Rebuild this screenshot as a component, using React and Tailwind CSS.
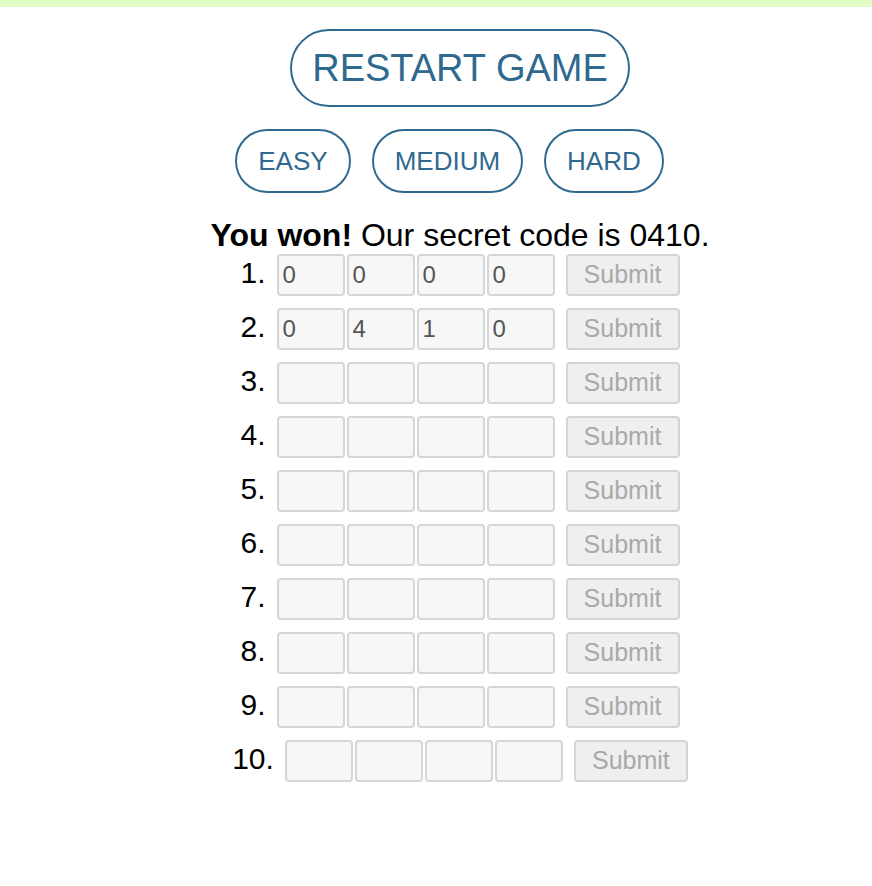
import { useState } from "react";

const guesses = [
  ["0", "0", "0", "0"],
  ["0", "4", "1", "0"],
];

const Row = ({ n, values }) => {
  return (
    <div className="h-[42px] flex items-baseline justify-center">
      <span className="text-[30px] leading-none text-black mr-[10px]">{n}.</span>
      {[0, 1, 2, 3].map((i) => (
        <input
          key={i}
          type="text"
          readOnly
          value={values ? values[i] : ""}
          className="w-[68px] h-[42px] mx-[1px] px-[4px] bg-[#f7f7f7] border-2 border-[#d6d6d6] rounded-[4px] text-[24px] text-[#555555] outline-none"
        />
      ))}
      <button
        disabled
        className="w-[114px] h-[42px] ml-[10px] bg-[#efefef] border-2 border-[#d4d4d4] rounded-[4px] text-[25px] text-[#a9a9a9]"
      >
        Submit
      </button>
    </div>
  );
};

const App = () => {
  const [level, setLevel] = useState("easy");
  const rows = Array.from({ length: 10 }, (_, i) => i + 1);

  return (
    <div className="min-h-[886px] bg-white font-['Liberation_Sans',Arial,sans-serif]">
      <div className="h-[7px] bg-[#e1fcc6]"></div>
      <div className="pl-12 flex flex-col items-center">
        <button className="mt-[22px] w-[340px] h-[78px] border-2 border-[#30698f] rounded-full text-[38px] text-[#30698f]">
          RESTART GAME
        </button>
        <div className="mt-[22px] flex">
          {["EASY", "MEDIUM", "HARD"].map((d) => (
            <button
              key={d}
              onClick={() => setLevel(d.toLowerCase())}
              className="h-[64px] px-[21px] mr-[21px] border-2 border-[#30698f] rounded-full text-[26px] text-[#30698f]"
            >
              {d}
            </button>
          ))}
        </div>
        <p className="mt-[24px] text-[32px] leading-[37px] text-black">
          <b>You won!</b> Our secret code is 0410.
        </p>
        <div className="flex flex-col gap-[12px]">
          {rows.map((n) => (
            <Row key={n} n={n} values={guesses[n - 1]} />
          ))}
        </div>
      </div>
    </div>
  );
};

export default App;
